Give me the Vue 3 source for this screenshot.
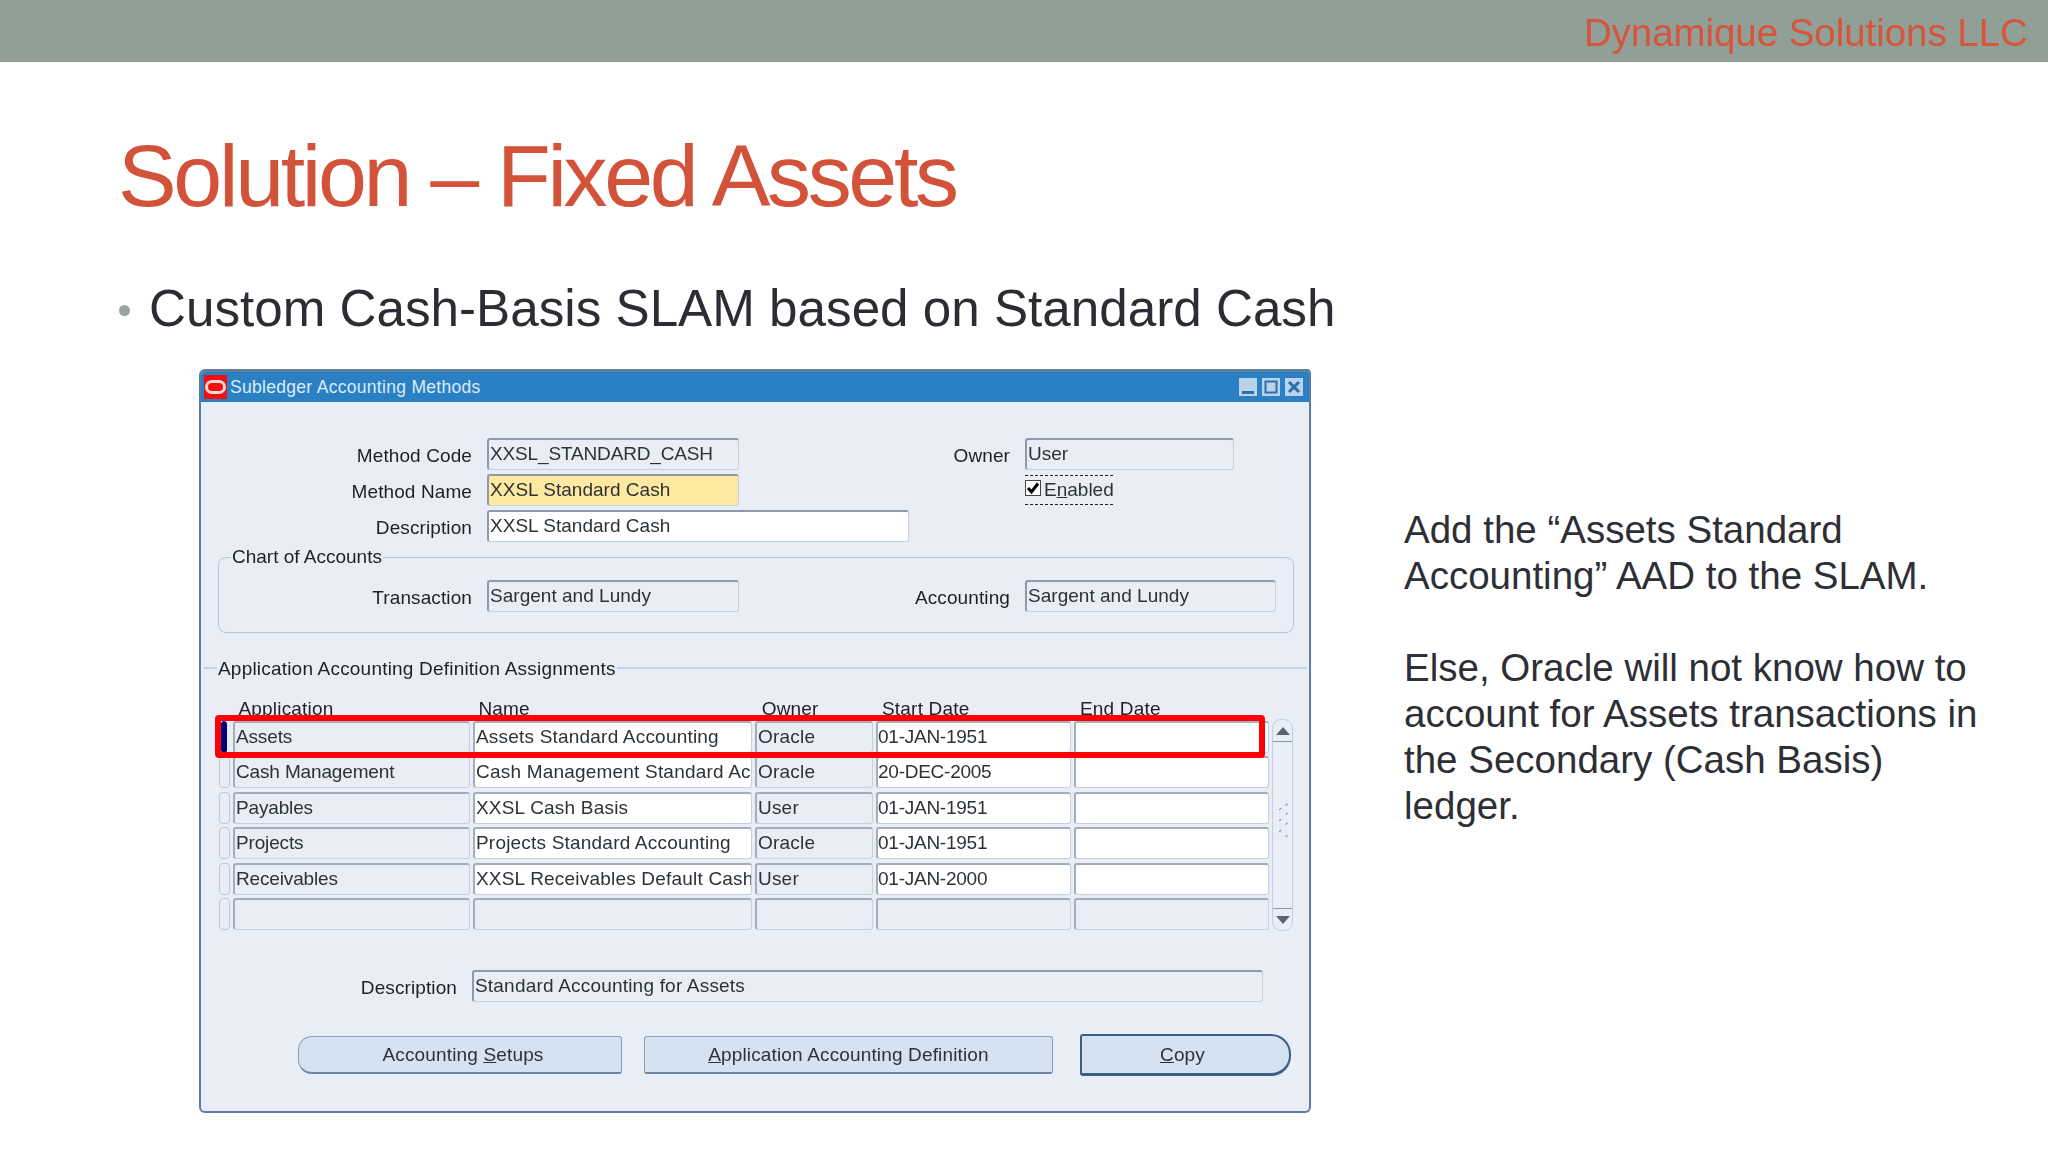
<template>
  <div class="slide">
    <header class="topbar">Dynamique Solutions LLC</header>
    <h1 class="title">Solution – Fixed Assets</h1>
    <div class="bullet"><span class="dot"></span>Custom Cash-Basis SLAM based on Standard Cash</div>

    <div class="content">
      <section class="win">
        <div class="winbar">
          <span class="logo"><i></i></span>
          <span class="wintitle">Subledger Accounting Methods</span>
          <span class="winbtns">
            <svg width="18" height="18" viewBox="0 0 18 18"><rect width="18" height="18" fill="#b9d3ea" /><rect x="3" y="13" width="12" height="3" fill="#2e6ea8" /></svg>
            <svg width="18" height="18" viewBox="0 0 18 18"><rect width="18" height="18" fill="#b9d3ea" /><rect x="3.5" y="3.5" width="11" height="11" fill="none" stroke="#2e6ea8" stroke-width="2" /></svg>
            <svg width="18" height="18" viewBox="0 0 18 18"><rect width="18" height="18" fill="#b9d3ea" /><path d="M4 4l10 10M14 4L4 14" stroke="#2e6ea8" stroke-width="3" /></svg>
          </span>
        </div>

        <div class="winbody">
          <div class="form">
            <div class="lbl">Method Code</div>
            <div class="fld ro f1 code">XXSL_STANDARD_CASH</div>
            <div class="lbl l2">Owner</div>
            <div class="fld ro f3">User</div>

            <div class="lbl">Method Name</div>
            <div class="fld req f1">XXSL Standard Cash</div>
            <div class="spacer"></div>
            <div class="check">
              <span class="box">
                <svg width="14" height="14" viewBox="0 0 14 14"><path d="M2 7l3.5 4L12 2.5" fill="none" stroke="#000" stroke-width="3" /></svg>
              </span>
              <span>E<u>n</u>abled</span>
            </div>

            <div class="lbl">Description</div>
            <div class="fld wr f2">XXSL Standard Cash</div>
          </div>

          <fieldset class="coa">
            <legend>Chart of Accounts</legend>
            <div class="form coaform">
              <div class="lbl">Transaction</div>
              <div class="fld ro f1">Sargent and Lundy</div>
              <div class="lbl l2">Accounting</div>
              <div class="fld ro f4">Sargent and Lundy</div>
            </div>
          </fieldset>

          <div class="section"><span>Application Accounting Definition Assignments</span></div>

          <div class="tablewrap">
            <div class="thead">
              <span></span>
              <span>Application</span>
              <span>Name</span>
              <span>Owner</span>
              <span>Start Date</span>
              <span>End Date</span>
            </div>
            <div class="tablerows">
              <div class="rows">
                <div v-for="(r, i) in rows" :key="i" class="row">
                  <span class="sel" :class="{ on: i === 0 }"></span>
                  <span class="cell ro app">{{ r.app }}</span>
                  <span class="cell" :class="i < 5 ? 'wr' : 'ro'">{{ r.name }}</span>
                  <span class="cell ro">{{ r.owner }}</span>
                  <span class="cell date" :class="i < 5 ? 'wr' : 'ro'">{{ r.start }}</span>
                  <span class="cell" :class="i < 5 ? 'wr' : 'ro'"></span>
                </div>
              </div>
              <div class="scroll">
                <div class="cap top">
                  <svg width="14" height="8" viewBox="0 0 14 8"><path d="M7 0l7 8H0z" fill="#5a6472" /></svg>
                </div>
                <div class="track">
                  <svg width="21" height="44" viewBox="0 0 21 44">
                    <path d="M7 11l2-2M7 23l2-2M7 35l2-2M14 6l2-2M14 16l2-2M14 27l2-2M14 41l2-2" stroke="#7f8c9c" stroke-width="1.2" />
                  </svg>
                </div>
                <div class="cap bottom">
                  <svg width="14" height="8" viewBox="0 0 14 8"><path d="M7 8l7-8H0z" fill="#5a6472" /></svg>
                </div>
              </div>
            </div>
            <div class="redbox"></div>
          </div>

          <div class="descrow">
            <div class="lbl">Description</div>
            <div class="fld ro grow">Standard Accounting for Assets</div>
          </div>

          <div class="btnrow">
            <button class="btn b1">Accounting <u>S</u>etups</button>
            <button class="btn b2"><u>A</u>pplication Accounting Definition</button>
            <button class="btn b3"><u>C</u>opy</button>
          </div>
        </div>
      </section>

      <aside class="notes">
        <p>Add the “Assets Standard Accounting” AAD to the SLAM.</p>
        <p>Else, Oracle will not know how to account for Assets transactions in the Secondary (Cash Basis) ledger.</p>
      </aside>
    </div>
  </div>
</template>

<script setup>
const rows = [
  { app: 'Assets', name: 'Assets Standard Accounting', owner: 'Oracle', start: '01-JAN-1951' },
  { app: 'Cash Management', name: 'Cash Management Standard Accounting', owner: 'Oracle', start: '20-DEC-2005' },
  { app: 'Payables', name: 'XXSL Cash Basis', owner: 'User', start: '01-JAN-1951' },
  { app: 'Projects', name: 'Projects Standard Accounting', owner: 'Oracle', start: '01-JAN-1951' },
  { app: 'Receivables', name: 'XXSL Receivables Default Cash Basis', owner: 'User', start: '01-JAN-2000' },
  { app: '', name: '', owner: '', start: '' },
]
</script>

<style>
html,
body {
  margin: 0;
  background: #fff;
}
</style>

<style scoped>
.slide {
  width: 2048px;
  height: 1152px;
  overflow: hidden;
  background: #fff;
  font-family: "Liberation Sans", Arial, sans-serif;
}

.topbar {
  height: 62px;
  box-sizing: border-box;
  background: #90a097;
  color: #d6553c;
  font-size: 38.4px;
  line-height: 65px;
  text-align: right;
  padding-right: 20px;
}

.title {
  margin: 64px 0 0 118px;
  font-size: 88px;
  line-height: 100px;
  font-weight: 400;
  letter-spacing: -3.35px;
  color: #d2533a;
}

.bullet {
  display: flex;
  align-items: center;
  margin: 52px 0 0 119px;
  font-size: 51.2px;
  line-height: 62px;
  color: #2c2c34;
}

.dot {
  width: 11px;
  height: 11px;
  border-radius: 50%;
  background: #99a69f;
  margin: 3px 19px 0 0;
}

.content {
  display: flex;
  margin: 29px 0 0 199px;
}

.win {
  width: 1112px;
  height: 744px;
  box-sizing: border-box;
  background: #e9eef6;
  border: 2px solid #5a7ea4;
  border-top: 3px solid #5f7f9f;
  border-radius: 6px 4px 6px 6px;
  font-size: 19px;
  color: #1c2126;
  flex: none;
  overflow: hidden;
  filter: blur(0.35px);
}

.winbar {
  height: 30px;
  display: flex;
  align-items: center;
  background: #2b80c3;
  color: #dcebf8;
  font-size: 17.5px;
  letter-spacing: 0.3px;
}

.logo {
  width: 23px;
  height: 24px;
  margin: 0 3px;
  background: #ee1111;
  display: flex;
  align-items: center;
  justify-content: center;
}

.logo i {
  width: 15px;
  height: 8px;
  border: 3px solid #ffd6d6;
  border-radius: 7px;
}

.winbtns {
  margin-left: auto;
  display: flex;
  gap: 5px;
  margin-right: 6px;
}

.winbody {
  padding: 36px 14px 0 15px;
  position: relative;
}

.form {
  display: grid;
  grid-template-columns: 271px 252px 271px 15px 1fr;
  grid-auto-rows: 32px;
  row-gap: 4px;
  align-items: center;
}

.lbl {
  text-align: right;
  padding: 3px 15px 0 0;
  white-space: nowrap;
  letter-spacing: 0.1px;
}

.l2 {
  grid-column: 3 / 5;
  padding-right: 15px;
}

.spacer {
  grid-column: 3 / 5;
}

.fld {
  height: 32px;
  box-sizing: border-box;
  line-height: 28px;
  padding-left: 1px;
  letter-spacing: 0.02px;
  border: 1px solid #c7d0dc;
  border-top: 2px solid #8f99a8;
  border-left: 2px solid #8f99a8;
  border-radius: 3px;
  white-space: nowrap;
  overflow: hidden;
}

.code {
  letter-spacing: -0.15px;
}

.grow {
  width: 791px;
  letter-spacing: 0.2px;
}

.ro {
  background: #e9eef6;
  color: #2c3238;
}

.wr {
  background: #fff;
  color: #2c3238;
}

.req {
  background: #ffe8a0;
  color: #2c3238;
}

.f2 {
  grid-column: 2 / 4;
  width: 422px;
}

.f3 {
  width: 209px;
}

.f4 {
  width: 251px;
}

.check {
  display: flex;
  align-items: center;
  justify-self: start;
  gap: 3px;
  height: 30px;
  width: 88px;
  box-sizing: border-box;
  border-top: 1px dashed #222;
  border-bottom: 1px dashed #222;
  white-space: nowrap;
  color: #2c3238;
}

.box {
  width: 14px;
  height: 14px;
  border: 1px solid #444;
  background: #fff;
  display: flex;
  margin-top: -4px;
}

.coa {
  margin: 4px 0 0 2px;
  width: 1076px;
  height: 87px;
  padding: 0;
  box-sizing: border-box;
  border: 1px solid #b8c6d8;
  border-radius: 8px;
}

.coa legend {
  margin-left: 12px;
  padding: 0 1px;
  line-height: 22px;
}

.coaform {
  margin-top: 12px;
  grid-template-columns: 268px 252px 271px 15px 1fr;
}

.section {
  margin: 19px -12px 0 -12px;
  height: 34px;
  display: flex;
  align-items: center;
  background: linear-gradient(#c3d2e4, #c3d2e4) 0 15px / 100% 2px no-repeat;
  padding-left: 13px;
  letter-spacing: 0.2px;
}

.section span {
  background: #e9eef6;
  padding: 0 1px;
}

.tablewrap {
  position: relative;
  margin-top: 12px;
}

.thead {
  display: grid;
  grid-template-columns: 11.4px 240px 283.3px 120.3px 198px 1fr;
  line-height: 22px;
  height: 20px;
  overflow: hidden;
  padding-left: 6px;
  box-sizing: border-box;
  letter-spacing: 0.2px;
}

.thead span {
  padding-left: 5px;
}

.tablerows {
  display: flex;
  margin-top: 3px;
}

.rows {
  display: grid;
  grid-auto-rows: 32px;
  row-gap: 3.4px;
  padding-left: 3px;
}

.row {
  display: grid;
  grid-template-columns: 11px 237px 279px 118px 195px 195px;
  column-gap: 3px;
}

.sel {
  background: #e9eef6;
  border: 1px solid #bcc6d4;
  border-radius: 4px;
  box-sizing: border-box;
}

.sel.on {
  background: #00007a;
  border-color: #00007a;
  margin: 0 3px 0 2px;
}

.cell {
  box-sizing: border-box;
  line-height: 28px;
  padding-left: 1px;
  letter-spacing: 0.2px;
  border: 1px solid #c7d0dc;
  border-top: 2px solid #a3adbb;
  border-left: 2px solid #a3adbb;
  border-radius: 3px;
  white-space: nowrap;
  overflow: hidden;
}

.app {
  letter-spacing: -0.15px;
}

.date {
  letter-spacing: -0.25px;
  padding-left: 0;
}

.scroll {
  width: 21px;
  height: 212px;
  margin: -2px 0 0 3px;
  box-sizing: border-box;
  border: 1px solid #c3cfdf;
  border-radius: 9px;
  display: flex;
  flex-direction: column;
}

.cap {
  height: 21px;
  flex: none;
  display: flex;
  align-items: center;
  justify-content: center;
}

.cap.top {
  border-bottom: 1px solid #8a97a8;
}

.cap.bottom {
  border-top: 1px solid #8a97a8;
}

.track {
  flex: 1;
  display: flex;
  align-items: center;
  justify-content: center;
  padding-bottom: 10px;
}

.redbox {
  position: absolute;
  left: -1px;
  top: 17px;
  width: 1050px;
  height: 43px;
  box-sizing: border-box;
  border: 6px solid #ff0008;
  border-radius: 4px;
}

.descrow {
  display: flex;
  align-items: center;
  margin-top: 39px;
}

.descrow .lbl {
  width: 256px;
  padding-right: 15px;
  box-sizing: border-box;
  flex: none;
}

.btnrow {
  display: flex;
  align-items: center;
  margin-top: 32px;
  padding-left: 82px;
}

.btn {
  height: 38px;
  box-sizing: border-box;
  background: #d4e2f1;
  border: 1px solid #8aa0ba;
  border-bottom: 2px solid #6d86a4;
  color: #2c3238;
  font: inherit;
  letter-spacing: 0.15px;
  padding: 0;
}

.b1 {
  width: 324px;
  border-radius: 14px 3px 3px 14px;
  padding-left: 6px;
}

.b2 {
  width: 409px;
  margin-left: 22px;
  border-radius: 3px;
}

.b3 {
  width: 211px;
  height: 42px;
  margin-left: 27px;
  padding-right: 6px;
  border: 2px solid #3e5f85;
  border-bottom-width: 3px;
  border-radius: 3px 20px 20px 3px;
}

.notes {
  margin: 138px 0 0 93px;
  width: 590px;
  font-size: 38.5px;
  line-height: 46px;
  color: #2e2e36;
}

.notes p {
  margin: 0 0 46px;
}
</style>
